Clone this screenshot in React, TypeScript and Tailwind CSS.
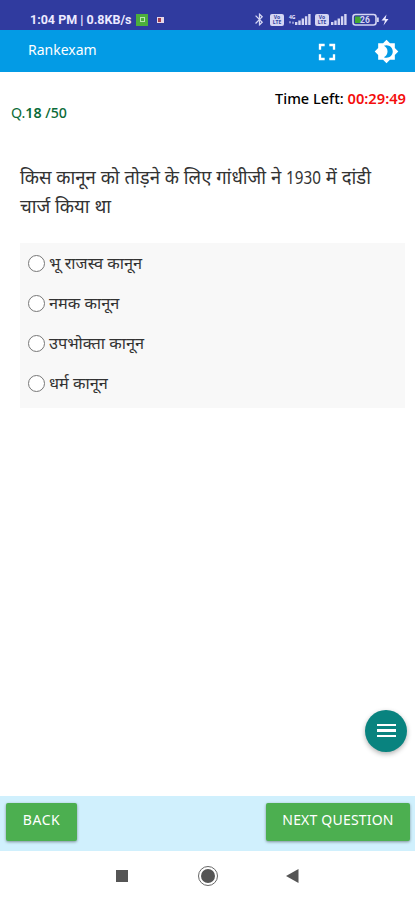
import { FC } from 'react'
import { MdBrightness4, MdFullscreen, MdBluetooth } from 'react-icons/md'

const options = ['भू राजस्व कानून', 'नमक कानून', 'उपभोक्ता कानून', 'धर्म कानून']

const Signal: FC = () => (
	<svg width="16" height="11" viewBox="0 0 16 11" fill="#d5d6f3">
		<path d="M0 8h2.4v3H0zM3.3 6.4h2.4V11H3.3zM6.6 4.4H9V11H6.6zM9.9 2.2h2.4V11H9.9zM13.2 0h2.4v11h-2.4z" />
	</svg>
)

const VoLte: FC = () => (
	<span className="flex h-[12px] w-[14px] shrink-0 flex-col items-center justify-center rounded-[2px] bg-[#d5d6f3] text-[5px] leading-[5px] font-bold text-[#303f9f]">
		<span>Vo</span>
		<span>LTE</span>
	</span>
)

const StatusBar: FC = () => (
	<div className="flex h-[30px] items-center bg-[#303b9f] pt-[9px] pl-[30px] text-[#eceaff]">
		<span className="w-[105px] text-[12.5px] leading-4 font-bold whitespace-nowrap font-[Roboto,sans-serif]">
			1:04 PM | 0.8KB/s
		</span>
		<span className="ml-[1px] flex size-[12px] items-center justify-center bg-[#4caf3c]">
			<span className="size-[5px] border border-[#b9e5b0]" />
		</span>
		<span className="ml-[9px] flex h-[6px] w-[7px] bg-[#e8d8e8] p-px">
			<span className="h-full w-[3px] bg-[#a03c50]" />
		</span>
		<div className="ml-[88px] flex shrink-0 items-center">
			<MdBluetooth size={15} color="#d5d6f3" />
			<span className="ml-[3px]">
				<VoLte />
			</span>
			<span className="ml-[5px] flex w-[8px] flex-col text-[5px] leading-[5px] font-bold">
				<span>4G</span>
				<svg width="5" height="5" viewBox="0 0 5 5" fill="#d5d6f3">
					<path d="M0 1.5h2L1 4zM3 3.5h2L4 1z" />
				</svg>
			</span>
			<span className="-ml-[2px]">
				<Signal />
			</span>
			<span className="ml-[4px]">
				<VoLte />
			</span>
			<span className="ml-[2px]">
				<Signal />
			</span>
			<svg className="ml-[5px]" width="38" height="14" viewBox="0 0 38 14">
				<rect x="1" y="1.5" width="23" height="10.5" rx="2.5" fill="#303b9f" stroke="#d5d6f3" strokeWidth="1.6" />
				<rect x="3" y="3.5" width="6" height="6.5" fill="#43a832" />
				<path d="M25 4.5h1.8v4.5H25z" fill="#d5d6f3" />
				<text x="8" y="9.9" fontSize="8.5" fontWeight="bold" fill="#d5d6f3" fontFamily="Roboto">
					26
				</text>
				<path d="M34.5 1.5 29.5 7.5h3.5L31.5 12.5 36.5 6h-3z" fill="#eceaff" />
			</svg>
		</div>
	</div>
)

const App: FC = () => {
	return (
		<div className="flex h-[900px] w-[415px] flex-col overflow-hidden bg-white font-['Noto_Sans','Noto_Sans_Devanagari',sans-serif]">
			<StatusBar />
			<header className="flex h-[42px] items-center bg-[#039be5] pl-[28px] text-white">
				<h1 className="w-[285px] pb-[3px] text-[14px] leading-5">Rankexam</h1>
				<MdFullscreen size={28} className="mt-[2px]" />
				<MdBrightness4 size={25} className="ml-[33px]" />
			</header>

			<main className="relative flex flex-1 flex-col">
				<div className="flex h-[51px] items-start justify-between pr-[9px] pl-[11px]">
					<p className="mt-[31px] text-[14.2px] leading-[19px] font-medium text-[#0b6b38]">
						<span className="font-normal">Q.</span>
						<span className="font-semibold">18</span> /50
					</p>
					<p className="mt-[17px] text-[14.5px] leading-[18px] font-medium text-black">
						Time Left: <span className="text-[14.7px] font-semibold text-[#f40d0d]">00:29:49</span>
					</p>
				</div>

				<p className="mt-[39px] ml-[20px] h-[59px] text-[18.5px] leading-[29px] whitespace-nowrap text-[#333]">
					किस कानून को तोड़ने के लिए गांधीजी ने{' '}
					<span className="inline-block h-[28px] w-[35px] origin-left scale-x-[0.87] text-[17.5px]">1930</span> में दांडी
					<br />
					चार्ज किया था
				</p>

				<div className="mt-[22px] mr-[10px] ml-[20px] h-[165px] bg-[#f8f8f8]">
					{options.map((option) => (
						<label key={option} className="flex h-[40px] items-center pl-[8px] text-[16.3px] text-[#333]">
							<span className="size-[17px] rounded-full border border-[#777] bg-white" />
							<span className="ml-[4px]">{option}</span>
						</label>
					))}
				</div>

				{/* question list button */}
				<button className="absolute top-[638px] left-[365px] flex size-[42px] items-center justify-center rounded-full bg-[#09837f] shadow-[0_2px_5px_rgba(0,0,0,0.3)]">
					<span className="flex flex-col gap-[3px] pb-[1px]">
						<span className="h-[2.5px] w-[19px] bg-white" />
						<span className="h-[2.5px] w-[19px] bg-white" />
						<span className="h-[2.5px] w-[19px] bg-white" />
					</span>
				</button>
			</main>

			<footer className="flex h-[55px] items-start justify-between bg-[#d0f0fd] pt-[7px] pr-[5px] pl-[6px] text-[14px] text-white">
				<button className="h-[38px] w-[71px] rounded-[2px] bg-[#4caf50] pb-[5px] tracking-[0.5px] shadow-[0_1px_3px_rgba(0,0,0,0.4)]">
					BACK
				</button>
				<button className="h-[38px] w-[144px] rounded-[2px] bg-[#4caf50] pb-[5px] tracking-[0.2px] shadow-[0_1px_3px_rgba(0,0,0,0.4)]">
					NEXT QUESTION
				</button>
			</footer>

			<nav className="flex h-[49px] items-center bg-white pl-[116px]">
				<span className="size-[12px] bg-[#555]" />
				<span className="ml-[70px] flex size-[20px] items-center justify-center rounded-full border border-[#666]">
					<span className="size-[14px] rounded-full bg-[#555]" />
				</span>
				<svg className="ml-[68px]" width="13" height="14" viewBox="0 0 13 14" fill="#555">
					<path d="M0 7 12.5 0v14z" />
				</svg>
			</nav>
		</div>
	)
}

export default App
